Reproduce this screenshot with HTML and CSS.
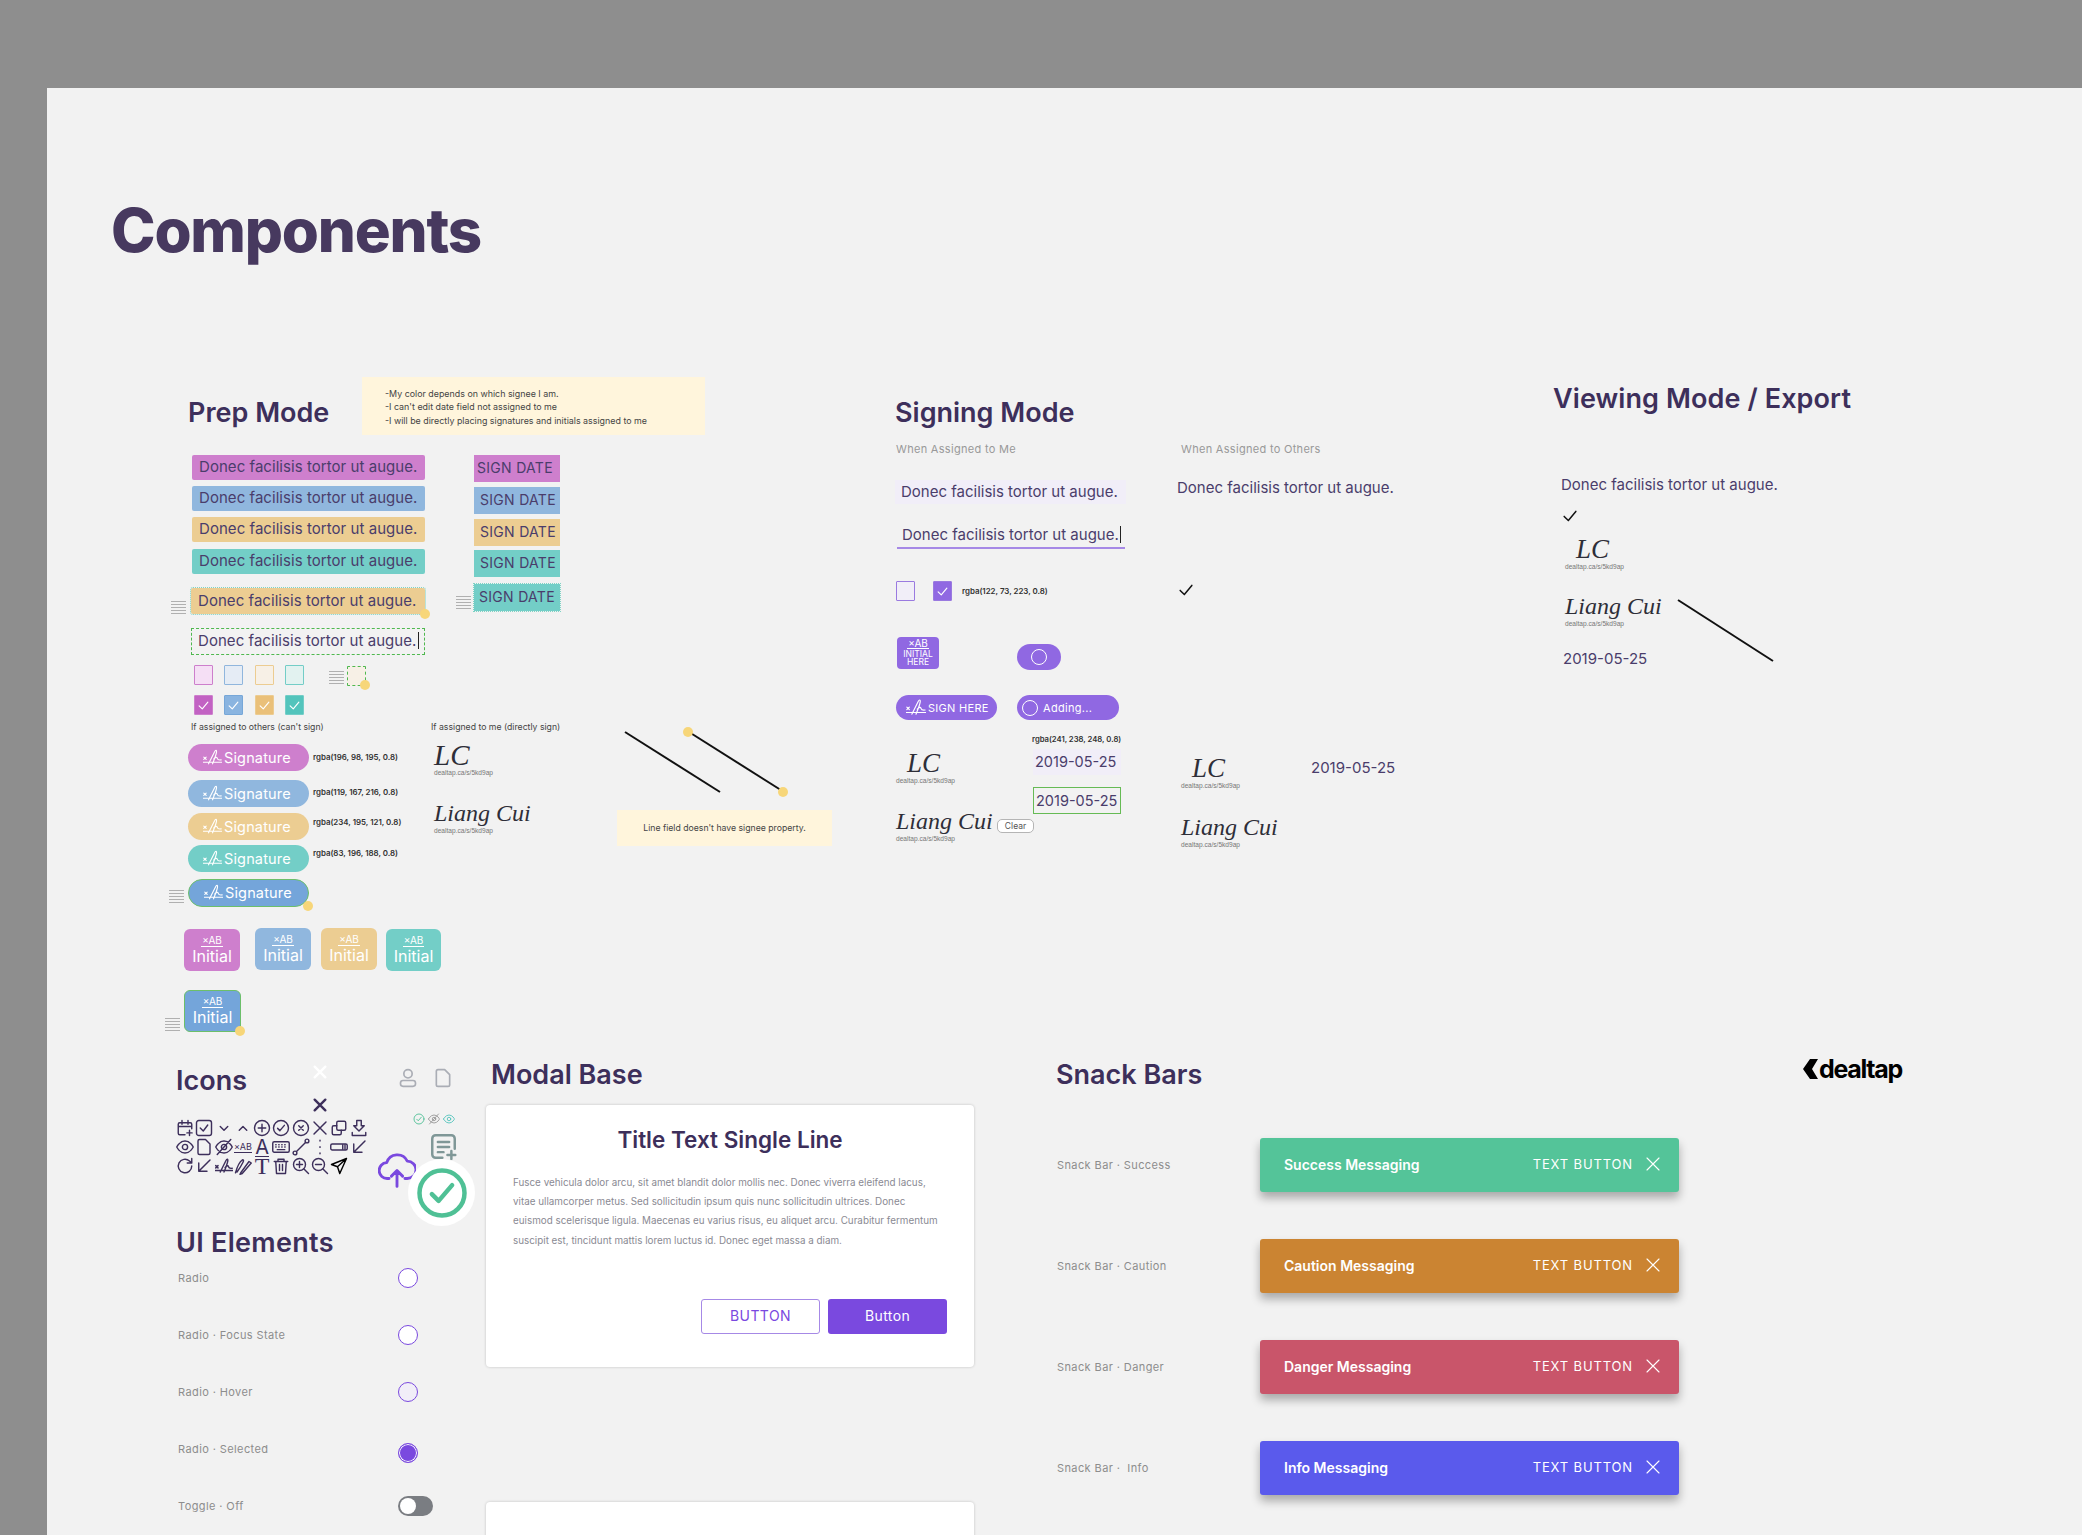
FILE: index.html
```html
<!DOCTYPE html>
<html lang="en">
<head>
    <meta charset="UTF-8">
    <title>Components</title>
    <link rel="stylesheet" href="styles.css">
</head>
<body>
<svg class="sprite" xmlns="http://www.w3.org/2000/svg">
    <symbol id="i-sig" viewBox="0 0 24 20"><path d="M1 9.500l3 3M4 9.500l-3 3M0 16h24M7 18C10 12 13 6 14.500 3c1.500-3 3-2.500 2.500.5C16.500 7 14 13 12 18M13.500 12c2-2.500 4-3 4.500-1s2 2.500 5 2"/></symbol>
    <symbol id="i-check" viewBox="0 0 24 24"><path d="M5 12.500l5 5 9-11"/></symbol>
    <symbol id="i-x" viewBox="0 0 24 24"><path d="M4 4l16 16M20 4L4 20"/></symbol>
    <symbol id="i-cal" viewBox="0 0 24 24"><path d="M12 21H5a2 2 0 0 1-2-2V7a2 2 0 0 1 2-2h14a2 2 0 0 1 2 2v6M8 2v5M16 2v5M3 10h18M18 15v7M14.500 18.500h7"/></symbol>
    <symbol id="i-box" viewBox="0 0 24 24"><rect x="2" y="2" width="20" height="20" rx="3"/><path d="M7 12l4 4 6-8"/></symbol>
    <symbol id="i-down" viewBox="0 0 24 24"><path d="M7 10l5 5 5-5"/></symbol>
    <symbol id="i-up" viewBox="0 0 24 24"><path d="M7 15l5-5 5 5"/></symbol>
    <symbol id="i-plus" viewBox="0 0 24 24"><circle cx="12" cy="12" r="10"/><path d="M12 7v10M7 12h10"/></symbol>
    <symbol id="i-ok" viewBox="0 0 24 24"><circle cx="12" cy="12" r="10"/><path d="M7.500 12.500l3 3 6-7"/></symbol>
    <symbol id="i-no" viewBox="0 0 24 24"><circle cx="12" cy="12" r="10"/><path d="M9 9l6 6M15 9l-6 6"/></symbol>
    <symbol id="i-copy" viewBox="0 0 24 24"><rect x="9" y="3" width="12" height="12" rx="2"/><path d="M15 15v4a2 2 0 0 1-2 2H5a2 2 0 0 1-2-2v-8a2 2 0 0 1 2-2h4"/></symbol>
    <symbol id="i-save" viewBox="0 0 24 24"><path d="M9 2h6v7h4l-7 7-7-7h4zM3 18v4h18v-4"/></symbol>
    <symbol id="i-eye" viewBox="0 0 24 24"><path d="M1 12s4-8 11-8 11 8 11 8-4 8-11 8S1 12 1 12z"/><circle cx="12" cy="12" r="3.500"/></symbol>
    <symbol id="i-file" viewBox="0 0 24 24"><path d="M6 2h8l6 6v12a2 2 0 0 1-2 2H6a2 2 0 0 1-2-2V4a2 2 0 0 1 2-2z"/></symbol>
    <symbol id="i-eyeoff" viewBox="0 0 24 24"><path d="M1 12s4-8 11-8 11 8 11 8-4 8-11 8S1 12 1 12zM3 22L21 2"/><circle cx="12" cy="12" r="3.500"/></symbol>
    <symbol id="i-keys" viewBox="0 0 24 24"><rect x="1" y="5" width="22" height="14" rx="2"/><path d="M5 9h.5M9 9h.5M13 9h.5M17 9h.5M5 12h.5M9 12h.5M13 12h.5M17 12h.5M7 15.500h10"/></symbol>
    <symbol id="i-node" viewBox="0 0 24 24"><circle cx="4" cy="20" r="2.500"/><circle cx="20" cy="4" r="2.500"/><path d="M6 18L18 6"/></symbol>
    <symbol id="i-more" viewBox="0 0 24 24"><path d="M12 3v1M12 11.500v1M12 20v1"/></symbol>
    <symbol id="i-toggle" viewBox="0 0 24 24"><rect x="1" y="8" width="22" height="8" rx="2"/><path d="M17 9v6M20 9v6"/></symbol>
    <symbol id="i-sw" viewBox="0 0 24 24"><path d="M20 4L5 19M5 8v11h11"/></symbol>
    <symbol id="i-redo" viewBox="0 0 24 24"><path d="M21 12a9 9 0 1 1-3-6.700L21 8M21 2v6h-6"/></symbol>
    <symbol id="i-pens" viewBox="0 0 24 24"><path d="M2 21C4 14 8 6 11 4c2-1 2 1 1 3-2 4-5 9-8 13M9 21L20 6l3 2-12 14-3 1z"/></symbol>
    <symbol id="i-trash" viewBox="0 0 24 24"><path d="M3 6h18M8 6V3h8v3M5 6l1 16h12l1-16M10 10v8M14 10v8"/></symbol>
    <symbol id="i-zin" viewBox="0 0 24 24"><circle cx="10" cy="10" r="8"/><path d="M22 22l-6-6M10 6v8M6 10h8"/></symbol>
    <symbol id="i-zout" viewBox="0 0 24 24"><circle cx="10" cy="10" r="8"/><path d="M22 22l-6-6M6 10h8"/></symbol>
    <symbol id="i-send" viewBox="0 0 24 24"><path d="M22 2L2 10l8 3 3 9zM22 2L10 13"/></symbol>
    <symbol id="i-user" viewBox="0 0 24 24"><circle cx="12" cy="7" r="5"/><rect x="3" y="15" width="18" height="7" rx="3"/></symbol>
    <symbol id="i-note" viewBox="0 0 24 24"><path d="M11 22H5a3 3 0 0 1-3-3V5a3 3 0 0 1 3-3h14a3 3 0 0 1 3 3v9M7 8h10M7 12.500h10M7 17h5M19 16v7M15.500 19.500h7"/></symbol>
    <symbol id="i-cloud" viewBox="0 0 24 24"><path d="M7 18H6a5 5 0 0 1-.5-10 7 7 0 0 1 13-1 5.500 5.500 0 0 1 0 11H17M12 23V13M8.500 16.500L12 13l3.500 3.500"/></symbol>
</svg>

<div class="frame">
    <main class="artboard"></main>

    <h1 class="at page-title">Components</h1>

    <!-- prep mode -->
    <h2 class="at heading h-prep">Prep Mode</h2>
    <div class="at note note-prep">
        <p>-My color depends on which signee I am.</p>
        <p>-I can't edit date field not assigned to me</p>
        <p>-I will be directly placing signatures and initials assigned to me</p>
    </div>

    <div class="at prep-fields">
        <div class="field c-pink">Donec facilisis tortor ut augue.</div>
        <div class="field c-blue">Donec facilisis tortor ut augue.</div>
        <div class="field c-sand">Donec facilisis tortor ut augue.</div>
        <div class="field c-teal">Donec facilisis tortor ut augue.</div>
        <div class="field c-sand is-picked">Donec facilisis tortor ut augue.<span class="dot dot-corner"></span></div>
        <div class="field is-typing">Donec facilisis tortor ut augue.<span class="caret"></span></div>
    </div>

    <div class="at prep-dates">
        <div class="date-tag c-pink tag-first">SIGN DATE</div>
        <div class="date-tag c-blue">SIGN DATE</div>
        <div class="date-tag c-sand">SIGN DATE</div>
        <div class="date-tag c-teal">SIGN DATE</div>
        <div class="date-tag c-teal is-picked tag-picked">SIGN DATE</div>
    </div>

    <span class="at grip g-field"></span>
    <span class="at grip g-date"></span>
    <span class="at grip g-box"></span>
    <span class="at grip g-pill"></span>
    <span class="at grip g-initial"></span>

    <div class="at box-grid">
        <span class="box b-pink"></span><span class="box b-blue"></span><span class="box b-sand"></span><span class="box b-teal"></span>
        <span class="box f-pink"><svg class="ico"><use href="#i-check"/></svg></span>
        <span class="box f-blue"><svg class="ico"><use href="#i-check"/></svg></span>
        <span class="box f-sand"><svg class="ico"><use href="#i-check"/></svg></span>
        <span class="box f-teal"><svg class="ico"><use href="#i-check"/></svg></span>
    </div>
    <span class="box b-picked"><span class="dot dot-corner"></span></span>

    <p class="at caption cap-others">If assigned to others (can't sign)</p>
    <p class="at caption cap-me">If assigned to me (directly sign)</p>

    <div class="at pill-list">
        <div class="pill c-pink"><svg class="ico"><use href="#i-sig"/></svg>Signature</div>
        <div class="pill c-blue"><svg class="ico"><use href="#i-sig"/></svg>Signature</div>
        <div class="pill c-sand"><svg class="ico"><use href="#i-sig"/></svg>Signature</div>
        <div class="pill c-teal"><svg class="ico"><use href="#i-sig"/></svg>Signature</div>
        <div class="pill c-picked"><svg class="ico"><use href="#i-sig"/></svg>Signature<span class="dot dot-corner"></span></div>
    </div>
    <div class="at swatch-list">
        <span class="swatch">rgba(196, 98, 195, 0.8)</span>
        <span class="swatch">rgba(119, 167, 216, 0.8)</span>
        <span class="swatch">rgba(234, 195, 121, 0.8)</span>
        <span class="swatch">rgba(83, 196, 188, 0.8)</span>
    </div>

    <div class="at sig-stack prep-sigs">
        <div class="sig"><span class="sig-name sig-lc-plain">LC</span><span class="sig-link">dealtap.ca/s/5kd9ap</span></div>
        <div class="sig"><span class="sig-name">Liang Cui</span><span class="sig-link">dealtap.ca/s/5kd9ap</span></div>
    </div>

    <svg class="at line-art la-prep" viewBox="0 0 170 64"><line x1="1" y1="2" x2="96" y2="62"/><line x1="65" y1="2" x2="160" y2="62"/></svg>
    <span class="at dot dot-a"></span>
    <span class="at dot dot-b"></span>
    <div class="at note note-line">Line field doesn't have signee property.</div>

    <div class="at initial-row">
        <div class="initial c-pink low"><span class="ab">×AB</span>Initial</div>
        <div class="initial c-blue"><span class="ab">×AB</span>Initial</div>
        <div class="initial c-sand"><span class="ab">×AB</span>Initial</div>
        <div class="initial c-teal low"><span class="ab">×AB</span>Initial</div>
    </div>
    <div class="initial c-picked i-picked"><span class="ab">×AB</span>Initial<span class="dot dot-corner"></span></div>

    <!-- signing mode -->
    <h2 class="at heading h-sign">Signing Mode</h2>
    <p class="at sublabel sl-me">When Assigned to Me</p>
    <p class="at sublabel sl-others">When Assigned to Others</p>

    <div class="at sign-fields">
        <div class="sign-field is-soft">Donec facilisis tortor ut augue.</div>
        <div class="sign-field is-line">Donec facilisis tortor ut augue.<span class="caret"></span></div>
    </div>
    <p class="at plain-text pt-others">Donec facilisis tortor ut augue.</p>

    <div class="at sign-checks">
        <span class="box b-purple"></span>
        <span class="box f-purple"><svg class="ico"><use href="#i-check"/></svg></span>
        <span class="swatch">rgba(122, 73, 223, 0.8)</span>
    </div>
    <svg class="at ico tick t-others"><use href="#i-check"/></svg>

    <div class="at sign-actions">
        <div class="initial-here"><span class="ab">×AB</span><span>INITIAL<br>HERE</span></div>
        <div class="busy-pill"><span class="spinner"></span></div>
        <div class="here-pill"><svg class="ico"><use href="#i-sig"/></svg>SIGN HERE</div>
        <div class="add-pill"><span class="spinner"></span>Adding...</div>
    </div>

    <div class="at sig-stack sign-sigs">
        <div class="sig"><span class="sig-name sig-lc">LC</span><span class="sig-link">dealtap.ca/s/5kd9ap</span></div>
        <div class="sig"><span class="sig-name">Liang Cui</span><span class="sig-link">dealtap.ca/s/5kd9ap</span></div>
    </div>
    <span class="at clear-btn">Clear</span>

    <div class="at sign-dates">
        <span class="swatch">rgba(241, 238, 248, 0.8)</span>
        <div class="date-field is-soft">2019-05-25</div>
        <div class="date-field is-valid">2019-05-25</div>
    </div>

    <div class="at sig-stack other-sigs">
        <div class="sig"><span class="sig-name sig-lc">LC</span><span class="sig-link">dealtap.ca/s/5kd9ap</span></div>
        <div class="sig"><span class="sig-name">Liang Cui</span><span class="sig-link">dealtap.ca/s/5kd9ap</span></div>
    </div>
    <p class="at plain-text pt-date">2019-05-25</p>

    <!-- viewing mode -->
    <h2 class="at heading h-view">Viewing Mode / Export</h2>
    <div class="at view-col">
        <p class="plain-text">Donec facilisis tortor ut augue.</p>
        <svg class="ico tick t-view"><use href="#i-check"/></svg>
        <div class="sig sig-v1"><span class="sig-name sig-lc">LC</span><span class="sig-link">dealtap.ca/s/5kd9ap</span></div>
        <div class="sig sig-v2"><span class="sig-name">Liang Cui</span><span class="sig-link">dealtap.ca/s/5kd9ap</span></div>
        <p class="plain-text pt-view">2019-05-25</p>
    </div>
    <svg class="at line-art la-view" viewBox="0 0 97 63"><line x1="1" y1="1" x2="96" y2="62"/></svg>

    <!-- icons -->
    <h2 class="at heading h-icons">Icons</h2>
    <svg class="at ico x-white"><use href="#i-x"/></svg>
    <svg class="at ico x-dark"><use href="#i-x"/></svg>
    <svg class="at ico grey-ico gi-user"><use href="#i-user"/></svg>
    <svg class="at ico grey-ico gi-file"><use href="#i-file"/></svg>
    <div class="at mini-row">
        <svg class="ico mini-green"><use href="#i-ok"/></svg>
        <svg class="ico mini-grey"><use href="#i-eyeoff"/></svg>
        <svg class="ico mini-teal"><use href="#i-eye"/></svg>
    </div>
    <svg class="at ico note-ico"><use href="#i-note"/></svg>
    <svg class="at ico cloud-ico"><use href="#i-cloud"/></svg>
    <div class="at ok-badge"><svg class="ico"><use href="#i-ok"/></svg></div>

    <div class="at icon-grid">
        <svg class="ico"><use href="#i-cal"/></svg>
        <svg class="ico"><use href="#i-box"/></svg>
        <svg class="ico"><use href="#i-down"/></svg>
        <svg class="ico"><use href="#i-up"/></svg>
        <svg class="ico"><use href="#i-plus"/></svg>
        <svg class="ico"><use href="#i-ok"/></svg>
        <svg class="ico"><use href="#i-no"/></svg>
        <svg class="ico"><use href="#i-x"/></svg>
        <svg class="ico"><use href="#i-copy"/></svg>
        <svg class="ico"><use href="#i-save"/></svg>

        <svg class="ico"><use href="#i-eye"/></svg>
        <svg class="ico"><use href="#i-file"/></svg>
        <svg class="ico"><use href="#i-eyeoff"/></svg>
        <span class="glyph-ab">×AB</span>
        <span class="glyph-a">A</span>
        <svg class="ico"><use href="#i-keys"/></svg>
        <svg class="ico"><use href="#i-node"/></svg>
        <svg class="ico"><use href="#i-more"/></svg>
        <svg class="ico"><use href="#i-toggle"/></svg>
        <svg class="ico"><use href="#i-sw"/></svg>

        <svg class="ico"><use href="#i-redo"/></svg>
        <svg class="ico"><use href="#i-sw"/></svg>
        <svg class="ico"><use href="#i-sig"/></svg>
        <svg class="ico"><use href="#i-pens"/></svg>
        <span class="glyph-t">T</span>
        <svg class="ico"><use href="#i-trash"/></svg>
        <svg class="ico"><use href="#i-zin"/></svg>
        <svg class="ico"><use href="#i-zout"/></svg>
        <svg class="ico ico-black"><use href="#i-send"/></svg>
    </div>

    <!-- ui elements -->
    <h2 class="at heading h-ui">UI Elements</h2>
    <div class="at ui-list">
        <span class="ui-label">Radio</span><span class="radio"></span>
        <span class="ui-label">Radio · Focus State</span><span class="radio"></span>
        <span class="ui-label">Radio · Hover</span><span class="radio is-hover"></span>
        <span class="ui-label">Radio · Selected</span><span class="radio is-on"></span>
        <span class="ui-label">Toggle · Off</span><span class="toggle"></span>
    </div>

    <!-- modal -->
    <h2 class="at heading h-modal">Modal Base</h2>
    <section class="at modal">
        <h3 class="modal-title">Title Text Single Line</h3>
        <p class="modal-body">Fusce vehicula dolor arcu, sit amet blandit dolor mollis nec. Donec viverra eleifend lacus,<br>vitae ullamcorper metus. Sed sollicitudin ipsum quis nunc sollicitudin ultrices. Donec<br>euismod scelerisque ligula. Maecenas eu varius risus, eu aliquet arcu. Curabitur fermentum<br>suscipit est, tincidunt mattis lorem luctus id. Donec eget massa a diam.</p>
        <div class="modal-actions">
            <button class="btn btn-ghost">BUTTON</button>
            <button class="btn btn-solid">Button</button>
        </div>
    </section>
    <section class="at modal modal-next"></section>

    <!-- snack bars -->
    <h2 class="at heading h-snack">Snack Bars</h2>
    <div class="at brand"><svg class="brand-mark" viewBox="0 0 16 20"><path d="M8 0h8L10 10l6 10H8L1 10z"/></svg><span>dealtap</span></div>
    <div class="at snack-list">
        <span class="ui-label">Snack Bar · Success</span>
        <div class="snack s-success"><span class="snack-msg">Success Messaging</span><span class="snack-btn">TEXT BUTTON</span><svg class="ico"><use href="#i-x"/></svg></div>
        <span class="ui-label">Snack Bar · Caution</span>
        <div class="snack s-caution"><span class="snack-msg">Caution Messaging</span><span class="snack-btn">TEXT BUTTON</span><svg class="ico"><use href="#i-x"/></svg></div>
        <span class="ui-label">Snack Bar · Danger</span>
        <div class="snack s-danger"><span class="snack-msg">Danger Messaging</span><span class="snack-btn">TEXT BUTTON</span><svg class="ico"><use href="#i-x"/></svg></div>
        <span class="ui-label">Snack Bar ·&nbsp; Info</span>
        <div class="snack s-info"><span class="snack-msg">Info Messaging</span><span class="snack-btn">TEXT BUTTON</span><svg class="ico"><use href="#i-x"/></svg></div>
    </div>
</div>
</body>
</html>
```

FILE: styles.css
```css
* { box-sizing: border-box; }
html, body { margin: 0; height: 100%; overflow: hidden; }
body { font-family: Inter, "Liberation Sans", sans-serif; color: #4a3d6b; }
h1, h2, h3, p { margin: 0; font-weight: normal; }
.sprite { display: none; }

/* the design canvas: everything below is placed on it */
.frame { position: relative; width: 2082px; height: 1535px; padding: 88px 0 0 47px; background: #8e8e8e; overflow: hidden; }
.artboard { height: 100%; background: #f2f2f2; }
.at { position: absolute; }

.ico { fill: none; stroke: currentColor; stroke-width: 2; stroke-linecap: round; stroke-linejoin: round; }

.page-title { left: 111px; top: 190px; font-size: 60px; line-height: 80px; font-weight: 800; letter-spacing: -1.2px; color: #47395f; }
.heading { font-size: 27px; line-height: 34px; font-weight: 600; color: #3d2f5b; white-space: nowrap; }
.h-prep { left: 188px; top: 396px; }
.h-sign { left: 895px; top: 396px; }
.h-view { left: 1553px; top: 382px; letter-spacing: 0.1px; }
.h-icons { left: 176px; top: 1064px; }
.h-ui { left: 176px; top: 1226px; letter-spacing: 0.3px; }
.h-modal { left: 491px; top: 1058px; }
.h-snack { left: 1056px; top: 1058px; }

.note { background: #fff5dc; color: #444; }
.note-prep { left: 362px; top: 377px; width: 343px; height: 58px; padding: 10px 0 0 23px; font-size: 8.9px; line-height: 13.4px; }
.note-line { left: 617px; top: 810px; width: 215px; height: 36px; font-size: 8.7px; line-height: 36px; text-align: center; }

/* assignee colours */
.c-pink { background: rgba(196, 98, 195, 0.8); }
.c-blue { background: rgba(119, 167, 216, 0.8); }
.c-sand { background: rgba(234, 195, 121, 0.8); }
.c-teal { background: rgba(83, 196, 188, 0.8); }
.c-picked { background: #74a5da; }

.prep-fields { left: 192px; top: 455px; width: 233px; display: grid; grid-template-rows: 31px 31px 32px 39px 40px 27px; }
.field { position: relative; height: 25px; padding-left: 7px; font-size: 15px; line-height: 24px; letter-spacing: 0.05px; white-space: nowrap; border-radius: 2px; }
.is-picked { outline: 1px dotted #7fd3c4; }
.field.is-picked { height: 26px; margin-left: -1px; line-height: 25px; }
.field.is-typing { height: 27px; margin-left: -1px; padding-left: 6px; line-height: 24px; border: 1px dashed #4fb84f; border-radius: 0; }
.caret { display: inline-block; width: 1px; height: 17px; margin-left: 2px; vertical-align: -3px; background: #222; }

.dot { display: block; width: 10px; height: 10px; border-radius: 50%; background: #f7d679; }
.dot-corner { position: absolute; right: -5px; bottom: -5px; }
.dot-a { left: 683px; top: 727px; }
.dot-b { left: 778px; top: 787px; }

.prep-dates { left: 474px; top: 455px; width: 86px; display: grid; grid-template-rows: 32px 32px 31px 34px 27px; }
.date-tag { height: 27px; padding-left: 6px; font-size: 14px; line-height: 26px; letter-spacing: 0.3px; }
.tag-first { padding-left: 3px; }
.tag-picked { padding-left: 5px; line-height: 25px; }

.grip { width: 15px; height: 13px; background: repeating-linear-gradient(#b0b0b0 0 1px, transparent 1px 3px); }
.g-field { left: 171px; top: 601px; }
.g-date { left: 456px; top: 596px; }
.g-box { left: 329px; top: 671px; }
.g-pill { left: 169px; top: 890px; }
.g-initial { left: 165px; top: 1018px; }

.box-grid { left: 194px; top: 665px; display: grid; grid-template-columns: 30px 31px 30px 20px; grid-template-rows: 30px 20px; }
.box { position: relative; display: flex; align-items: center; justify-content: center; width: 19px; height: 20px; border: 1px solid; border-radius: 1px; color: #fff; }
.box .ico { width: 15px; height: 15px; stroke-width: 1.8; }
.b-pink { background: #f5dff5; border-color: #cd7fcc; }
.b-blue { background: #e5ecf5; border-color: #90b6dd; }
.b-sand { background: #f7f0e6; border-color: #eccc91; }
.b-teal { background: #e2f2f0; border-color: #73cdc7; }
.f-pink { background: #c262c3; border-color: #cd7fcc; }
.f-blue { background: #8ab4e0; border-color: #77a7d8; }
.f-sand { background: #eac079; border-color: #eccc91; }
.f-teal { background: #53c4bc; border-color: #73cdc7; }
.b-picked { position: absolute; left: 347px; top: 666px; background: #f7f0e6; border: 1px dashed #4fb84f; }
.b-purple { background: #f1eef8; border-color: #9a7ae0; }
.f-purple { background: #9068e2; border-color: #9a7ae0; }

.caption { font-size: 8.7px; line-height: 14px; color: #444; white-space: nowrap; }
.cap-others { left: 191px; top: 720px; }
.cap-me { left: 431px; top: 720px; }

.pill-list { left: 188px; top: 744px; width: 121px; display: grid; grid-template-rows: 36px 33px 32px 34px 28px; }
.pill { position: relative; display: flex; align-items: center; gap: 2px; height: 27px; padding: 0 0 1px 15px; border-radius: 14px; font-size: 14.5px; letter-spacing: 0.15px; color: #fff; }
.pill .ico { width: 19px; height: 17px; stroke-width: 1.4; }
.pill.c-picked { height: 28px; border: 1px solid #6cbf6a; }

.swatch { font-size: 7.9px; font-weight: 600; color: #333; white-space: nowrap; }
.swatch-list { left: 313px; top: 752px; display: grid; grid-template-rows: 35px 30px 31px 12px; }

.sig { display: flex; flex-direction: column; }
.sig-name { padding-bottom: 2px; font-family: "Liberation Serif", serif; font-style: italic; font-size: 24px; line-height: 22px; color: #2e2e38; white-space: nowrap; }
.sig-lc { padding-left: 11px; font-size: 27px; }
.sig-lc-plain { font-size: 29px; }
.sig-link { font-family: "Liberation Sans", sans-serif; font-size: 6.6px; line-height: 10px; color: #777; }
.sig-stack { display: grid; }
.prep-sigs { left: 434px; top: 744px; grid-template-rows: 58px auto; }
.sign-sigs { left: 896px; top: 752px; grid-template-rows: 58px auto; }
.other-sigs { left: 1181px; top: 757px; grid-template-rows: 59px auto; }

.line-art { overflow: visible; }
.line-art line { stroke: #111; stroke-width: 2; }
.la-prep { left: 624px; top: 730px; width: 170px; height: 64px; }
.la-view { left: 1677px; top: 599px; width: 97px; height: 63px; }

.initial-row { left: 184px; top: 928px; display: grid; grid-template-columns: 71px 66px 65px 55px; }
.initial { position: relative; display: flex; flex-direction: column; align-items: center; width: 56px; height: 42px; padding-top: 5px; border-radius: 6px; font-size: 16px; line-height: 19px; color: #fff; }
.initial.low { margin-top: 1px; }
.c-teal.initial { width: 55px; }
.ab { font-size: 10px; line-height: 12px; padding: 0 1px; border-bottom: 1px solid currentColor; }
.i-picked { position: absolute; left: 184px; top: 990px; width: 57px; padding-top: 4px; border: 1px solid #6cbf6a; }

.sublabel { font-size: 11px; line-height: 14px; color: #999; letter-spacing: 0.3px; white-space: nowrap; }
.sl-me { left: 896px; top: 442px; }
.sl-others { left: 1181px; top: 442px; }

.sign-fields { left: 895px; top: 480px; width: 231px; display: grid; grid-template-rows: 43px 26px; }
.sign-field { height: 24px; padding-left: 6px; font-size: 15px; line-height: 24px; white-space: nowrap; }
.sign-field.is-soft { background: #f1eef8; }
.sign-field.is-line { height: 26px; margin: 0 1px 0 2px; padding-left: 5px; border-bottom: 2px solid #a689e6; }
.sign-field .caret { margin-left: 1px; }
.plain-text { font-size: 15px; line-height: 20px; white-space: nowrap; }
.pt-others { left: 1177px; top: 478px; }
.pt-date { left: 1311px; top: 758px; }

.sign-checks { left: 896px; top: 581px; display: flex; align-items: center; gap: 10px; }
.sign-checks .f-purple { margin-left: 8px; }
.tick { width: 20px; height: 20px; color: #111; stroke-width: 1.8; }
.t-others { left: 1176px; top: 580px; }

.sign-actions { left: 896px; top: 637px; display: grid; grid-template-columns: 121px 102px; grid-template-rows: 58px 25px; color: #fff; }
.initial-here { display: flex; flex-direction: column; align-items: center; width: 42px; height: 32px; margin-left: 1px; padding-top: 1px; background: #9068e2; border-radius: 4px; font-size: 8.5px; line-height: 7.5px; text-align: center; }
.initial-here .ab { line-height: 10px; margin-bottom: 2px; }
.busy-pill { display: flex; align-items: center; justify-content: center; width: 44px; height: 26px; margin-top: 7px; background: #9068e2; border-radius: 13px; }
.spinner { flex: none; width: 16px; height: 16px; border: 1px solid #fff; border-radius: 50%; }
.here-pill, .add-pill { display: flex; align-items: center; height: 25px; background: #9068e2; border-radius: 13px; font-size: 11px; letter-spacing: 0.3px; }
.here-pill { width: 101px; padding-left: 10px; gap: 2px; }
.here-pill .ico { width: 20px; height: 17px; stroke-width: 1.4; }
.add-pill { padding-left: 5px; gap: 5px; }

.clear-btn { left: 997px; top: 819px; width: 37px; height: 14px; background: #fff; border: 1px solid #b5b5b5; border-radius: 5px; font-size: 8.5px; line-height: 12px; text-align: center; color: #555; }

.sign-dates { left: 1033px; top: 735px; width: 87px; display: grid; grid-template-rows: 14px 38px 27px; }
.sign-dates .swatch { margin-left: -1px; font-size: 7.7px; }
.date-field { height: 26px; padding-left: 2px; font-size: 14.5px; line-height: 26px; white-space: nowrap; }
.date-field.is-soft { background: #f1eef8; }
.date-field.is-valid { height: 27px; line-height: 25px; border: 1px solid #66bb55; padding-left: 2px; }

.view-col { left: 1561px; top: 475px; display: flex; flex-direction: column; }
.t-view { margin: 11px 0 0 -1px; }
.sig-v1 { margin: 12px 0 0 4px; }
.sig-v2 { margin: 23px 0 0 4px; }
.pt-view { margin: 20px 0 0 2px; }

.x-white { left: 312px; top: 1064px; width: 16px; height: 16px; color: #fff; stroke-width: 3.6; }
.x-dark { left: 312px; top: 1097px; width: 16px; height: 16px; color: #3d2f5b; stroke-width: 3.6; }
.grey-ico { width: 20px; height: 20px; color: #aaadb5; }
.gi-user { left: 398px; top: 1068px; }
.gi-file { left: 433px; top: 1068px; }
.mini-row { left: 413px; top: 1113px; display: flex; gap: 3px; }
.mini-row .ico { width: 12px; height: 12px; stroke-width: 1.8; }
.mini-green { color: #4fc095; }
.mini-grey { color: #999; }
.mini-teal { color: #53c4bc; }
.note-ico { left: 430px; top: 1133px; width: 27px; height: 27px; color: #7f9797; stroke-width: 2.2; }
.cloud-ico { left: 378px; top: 1150px; width: 38px; height: 38px; color: #7a49df; stroke-width: 1.8; }
.ok-badge { left: 408px; top: 1159px; width: 67px; height: 67px; display: flex; align-items: center; justify-content: center; background: #fff; border-radius: 50%; color: #4fc095; }
.ok-badge .ico { width: 54px; height: 54px; }

.icon-grid { left: 176px; top: 1119px; display: grid; grid-template-columns: repeat(10, 18px); grid-template-rows: repeat(3, 18px); gap: 1px 1.3px; align-items: center; justify-items: center; color: #3d2f5b; }
.icon-grid .ico { width: 18px; height: 18px; stroke-width: 1.9; }
.icon-grid .ico-black { color: #000; }
.glyph-ab { font-size: 9px; line-height: 11px; border-bottom: 1px solid currentColor; white-space: nowrap; }
.glyph-a { font-size: 20px; line-height: 18px; border-bottom: 1px solid currentColor; }
.glyph-t { font-family: "Liberation Serif", serif; font-size: 24px; line-height: 18px; }

.ui-list { left: 178px; top: 1249px; display: grid; grid-template-columns: 220px 36px; grid-auto-rows: 57px; align-items: center; }
.ui-label { font-size: 11px; line-height: 14px; color: #8d8d8d; letter-spacing: 0.4px; white-space: nowrap; }
.radio { display: block; width: 20px; height: 20px; background: #fff; border: 1px solid #7a49df; border-radius: 50%; }
.radio.is-hover { background: #f1eef8; }
.radio.is-on { margin-top: 8px; background: #7a49df; box-shadow: inset 0 0 0 1px #fff; }
.toggle { position: relative; display: block; width: 35px; height: 20px; background: #7a7d82; border-radius: 10px; }
.toggle::before { content: ""; position: absolute; left: 2px; top: 2px; width: 16px; height: 16px; background: #fff; border-radius: 50%; }

.modal { left: 486px; top: 1105px; width: 488px; height: 262px; padding-top: 21px; display: flex; flex-direction: column; background: #fff; border-radius: 4px; box-shadow: 0 0 3px rgba(0, 0, 0, 0.2); }
.modal-next { top: 1502px; height: 80px; }
.modal-title { font-size: 22.5px; line-height: 28px; font-weight: 600; text-align: center; color: #3d2f5b; }
.modal-body { margin: 19px 0 0 27px; font-size: 9.85px; line-height: 19.2px; color: #8a8a93; white-space: nowrap; }
.modal-actions { margin: auto 27px 33px 0; display: flex; justify-content: flex-end; gap: 8px; }
.btn { width: 119px; height: 35px; font-family: inherit; font-size: 14px; letter-spacing: 0.4px; border-radius: 3px; padding: 0 0 2px; }
.btn-ghost { background: #fff; border: 1px solid #a689e6; color: #7a49df; }
.btn-solid { background: #7a49df; border: none; color: #fff; }

.brand { left: 1802px; top: 1054px; display: flex; align-items: center; gap: 1px; font-size: 25px; line-height: 30px; font-weight: 700; letter-spacing: -1.3px; color: #000; }
.brand-mark { width: 16px; height: 20px; fill: #000; }

.snack-list { left: 1057px; top: 1138px; display: grid; grid-template-columns: 203px 419px; grid-auto-rows: 54px; row-gap: 47px; align-items: center; }
.snack { display: flex; align-items: center; height: 54px; padding: 0 17px 2px 24px; border-radius: 3px; box-shadow: 0 6px 10px rgba(0, 0, 0, 0.3); color: #fff; }
.snack-msg { flex: 1; font-size: 14px; font-weight: 600; white-space: nowrap; }
.snack-btn { margin-right: 11px; font-size: 13px; letter-spacing: 0.85px; }
.snack .ico { width: 18px; height: 18px; stroke-width: 1.5; }
.s-success { background: #54c499; }
.s-caution { background: #cb8432; }
.s-danger { background: #c9556a; }
.s-info { background: #5a5aec; }
```
